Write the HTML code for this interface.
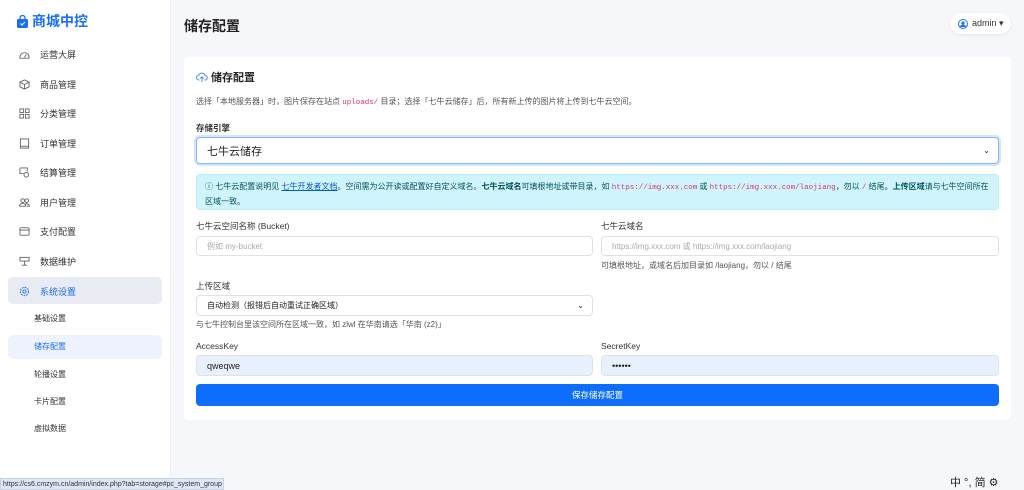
<!DOCTYPE html>
<html><head><meta charset="utf-8"><style>
*{box-sizing:border-box;margin:0;padding:0}
body{width:1024px;height:490px;overflow:hidden;background:#f6f7fb;font-family:"Liberation Sans","Noto Sans CJK SC",sans-serif;color:#212529;position:relative}
.side{position:absolute;left:0;top:0;width:171px;height:490px;background:#fff;border-right:1px solid #eceef3}
.logo{position:absolute;left:17px;top:11px;font-size:14px;font-weight:bold;color:#1a6ef5;display:flex;align-items:center;gap:4px}
.it{position:absolute;left:19px;font-size:9px;color:#333;display:flex;align-items:center;gap:10px;height:14px}
.it svg{width:11px;height:11px}
.act{position:absolute;left:8px;top:277px;width:154px;height:27px;background:#e8ebf2;border-radius:5px}
.sub{position:absolute;left:34px;font-size:8px;color:#333}
.subact{position:absolute;left:8px;top:335px;width:154px;height:24px;background:#eef2fe;border-radius:5px}
.h1{position:absolute;left:184px;top:16px;font-size:14px;font-weight:bold;color:#222}
.user{position:absolute;left:950px;top:13px;width:61px;height:21px;background:#fff;border-radius:11px;box-shadow:0 1px 3px rgba(0,0,0,.08);font-size:9px;color:#333;display:flex;align-items:center;padding-left:8px;gap:4px}
.card{position:absolute;left:184px;top:57px;width:827px;height:363px;background:#fff;border-radius:5px}
.a{position:absolute}
.lbl{font-size:8.5px;color:#333}
.inp{position:absolute;border:1px solid #dee2e6;border-radius:4px;background:#fff;font-size:8px;color:#aaa;padding-left:10px;display:flex;align-items:center}
.help{font-size:8px;color:#555}
code{font-family:"Liberation Mono",monospace;color:#d63384;font-size:7.5px}
</style></head><body>
<div class="side">
<div class="logo"><svg width="11" height="13" viewBox="0 0 11 13"><path d="M3 4V3a2.5 2.5 0 0 1 5 0v1" stroke="#1a6ef5" fill="none" stroke-width="1.3"/><rect x="0" y="4" width="11" height="9" rx="1.5" fill="#1a6ef5"/><path d="M3.5 8.5l1.5 1.5 3-3" stroke="#fff" fill="none" stroke-width="1.1"/></svg>商城中控</div>
<div class="it" style="top:47px"><svg viewBox="0 0 12 12"><path d="M1 9a5 5 0 0 1 10 0v1H1z M6 9l2-3" fill="none" stroke="#666"/></svg>运营大屏</div>
<div class="it" style="top:77px"><svg viewBox="0 0 12 12"><path d="M6 1l5 2.5v5L6 11 1 8.5v-5z M1 3.5L6 6l5-2.5 M6 6v5" fill="none" stroke="#666"/></svg>商品管理</div>
<div class="it" style="top:106px"><svg viewBox="0 0 12 12"><g fill="none" stroke="#666"><rect x="1" y="1" width="4" height="4"/><rect x="7" y="1" width="4" height="4"/><rect x="1" y="7" width="4" height="4"/><rect x="7" y="7" width="4" height="4"/></g></svg>分类管理</div>
<div class="it" style="top:136px"><svg viewBox="0 0 12 12"><rect x="1.5" y="1" width="9" height="10" fill="none" stroke="#666"/><path d="M1.5 9h9" stroke="#666"/></svg>订单管理</div>
<div class="it" style="top:165px"><svg viewBox="0 0 12 12"><path d="M1 1h8v4 M1 1v6h4" fill="none" stroke="#666"/><circle cx="8" cy="8.5" r="2.5" fill="none" stroke="#666"/></svg>结算管理</div>
<div class="it" style="top:195px"><svg viewBox="0 0 12 12"><g fill="none" stroke="#666"><circle cx="4" cy="4" r="2"/><circle cx="8.5" cy="4" r="2"/><path d="M0.5 10a3.5 3 0 0 1 7 0z M7 7.5a3.5 3 0 0 1 4.5 2.5h-3"/></g></svg>用户管理</div>
<div class="it" style="top:224px"><svg viewBox="0 0 12 12"><rect x="1" y="2" width="10" height="8" rx="1" fill="none" stroke="#666"/><path d="M1 4.5h10" stroke="#666"/></svg>支付配置</div>
<div class="it" style="top:254px"><svg viewBox="0 0 12 12"><rect x="1" y="1.5" width="10" height="4" fill="none" stroke="#666"/><path d="M6 5.5v4 M3 10h6" stroke="#666"/></svg>数据维护</div>
<div class="act"></div>
<div class="it" style="top:284px;color:#1a6ef5"><svg viewBox="0 0 12 12"><circle cx="6" cy="6" r="4.5" fill="none" stroke="#1a6ef5" stroke-dasharray="2 1"/><circle cx="6" cy="6" r="1.8" fill="none" stroke="#1a6ef5"/></svg>系统设置</div>
<div class="sub" style="top:313px">基础设置</div>
<div class="subact"></div>
<div class="sub" style="top:341px;color:#1a6ef5">储存配置</div>
<div class="sub" style="top:369px">轮播设置</div>
<div class="sub" style="top:396px">卡片配置</div>
<div class="sub" style="top:423px">虚拟数据</div>
</div>
<div class="h1">储存配置</div>
<div class="user"><svg width="10" height="10" viewBox="0 0 10 10"><circle cx="5" cy="5" r="4.5" fill="none" stroke="#1a6ef5"/><circle cx="5" cy="4" r="1.6" fill="#1a6ef5"/><path d="M2 8a3 2.4 0 0 1 6 0" fill="#1a6ef5"/></svg>admin ▾</div>
<div class="card">
<div class="a" style="left:12px;top:12px;font-size:11px;font-weight:bold;color:#222;display:flex;align-items:center;gap:3px"><svg width="12" height="11" viewBox="0 0 12 11"><path d="M3.5 8H3a2.5 2.5 0 0 1 0-5 3.2 3.2 0 0 1 6 .5A2.2 2.2 0 0 1 9 8h-.5 M6 10V5 M4.3 6.5L6 4.8l1.7 1.7" fill="none" stroke="#4a8cf7" stroke-width="1"/></svg>储存配置</div>
<div class="a help" style="left:12px;top:39px;color:#555">选择「本地服务器」时，图片保存在站点 <code>uploads/</code> 目录；选择「七牛云储存」后，所有新上传的图片将上传到七牛云空间。</div>
<div class="a lbl" style="left:12px;top:65px;font-weight:bold">存储引擎</div>
<div class="inp" style="left:12px;top:80px;width:803px;height:27px;border:1px solid #86b7fe;box-shadow:0 0 0 2px rgba(13,110,253,.18);color:#222;font-size:11px">七牛云储存<span style="position:absolute;right:8px;font-size:8px">⌄</span></div>
<div class="a" style="left:12px;top:117px;width:803px;height:36px;background:#cff4fc;border:1px solid #b6effb;border-radius:4px;font-size:8px;color:#055160;padding:5px 8px;line-height:13px">ⓘ 七牛云配置说明见 <u style="color:#0a58ca">七牛开发者文档</u>。空间需为公开读或配置好自定义域名。<b>七牛云域名</b>可填根地址或带目录，如 <code>https://img.xxx.com</code> 或 <code>https://img.xxx.com/laojiang</code>，勿以 <code>/</code> 结尾。<b>上传区域</b>请与七牛空间所在区域一致。</div>
<div class="a lbl" style="left:12px;top:163px">七牛云空间名称 (Bucket)</div>
<div class="a lbl" style="left:417px;top:163px">七牛云域名</div>
<div class="inp" style="left:12px;top:179px;width:397px;height:20px">例如 my-bucket</div>
<div class="inp" style="left:417px;top:179px;width:398px;height:20px">https://img.xxx.com 或 https://img.xxx.com/laojiang</div>
<div class="a help" style="left:417px;top:203px">可填根地址，或域名后加目录如 /laojiang，勿以 / 结尾</div>
<div class="a lbl" style="left:12px;top:223px">上传区域</div>
<div class="inp" style="left:12px;top:238px;width:397px;height:21px;color:#222">自动检测（报错后自动重试正确区域）<span style="position:absolute;right:8px">⌄</span></div>
<div class="a help" style="left:12px;top:262px">与七牛控制台里该空间所在区域一致，如 zlwl 在华南请选「华南 (z2)」</div>
<div class="a lbl" style="left:12px;top:284px">AccessKey</div>
<div class="a lbl" style="left:417px;top:284px">SecretKey</div>
<div class="inp" style="left:12px;top:298px;width:397px;height:21px;background:#e8f0fe;color:#222;font-size:9px">qweqwe</div>
<div class="inp" style="left:417px;top:298px;width:398px;height:21px;background:#e8f0fe;color:#222;font-size:9px">••••••</div>
<div class="a" style="left:12px;top:327px;width:803px;height:22px;background:#0d6efd;border-radius:4px;color:#fff;font-size:8.5px;display:flex;align-items:center;justify-content:center">保存储存配置</div>
</div>
<div class="a" style="left:0;top:478px;width:224px;height:12px;background:#dee6f5;border:1px solid #c8d2e6;font-size:7px;color:#333;padding-left:2px;line-height:11px">https://cs6.cmzym.cn/admin/index.php?tab=storage#pc_system_group</div>
<div class="a" style="left:950px;top:474px;font-size:11px;color:#222;background:#f6f7fb">中 °, 简 ⚙</div>
</body></html>
